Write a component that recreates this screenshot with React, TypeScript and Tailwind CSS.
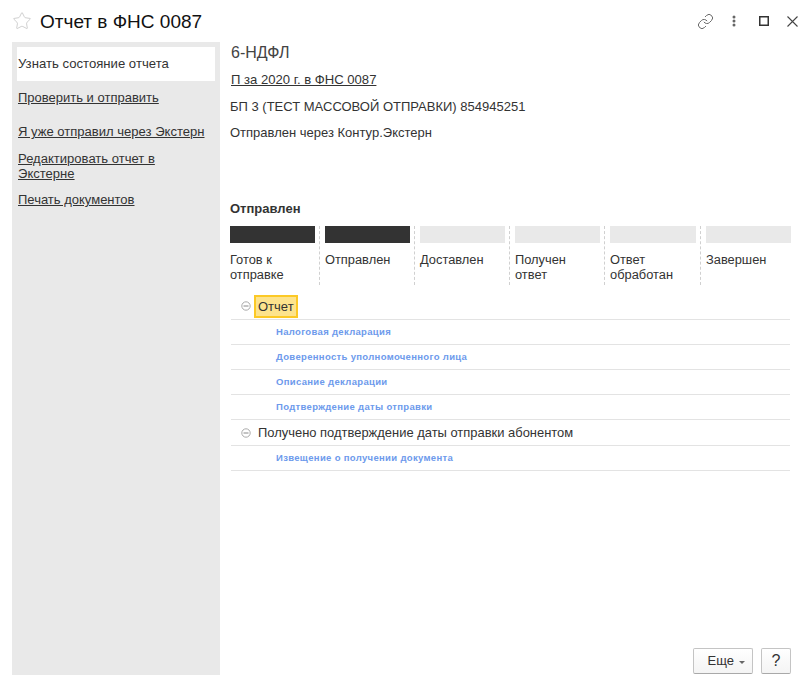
import { Link, Star } from "lucide-react";

const steps = [
  { label: "Готов к отправке", done: true, cell: "w-[90px] pr-[4px] border-r" },
  { label: "Отправлен", done: true, cell: "w-[95px] pl-[5px] pr-[4px] border-r" },
  { label: "Доставлен", done: false, cell: "w-[95px] pl-[5px] pr-[4px] border-r" },
  { label: "Получен ответ", done: false, cell: "w-[95px] pl-[5px] pr-[4px] border-r" },
  { label: "Ответ обработан", done: false, cell: "w-[96px] pl-[5px] pr-[4px] border-r" },
  { label: "Завершен", done: false, cell: "w-[90px] pl-[5px]" },
];

function MinusCircle() {
  return (
    <svg width="10" height="10" viewBox="0 0 10 10" className="shrink-0">
      <circle cx="5" cy="5" r="4.2" fill="none" stroke="#aaa" />
      <path d="M2.5 5h5" stroke="#888" />
    </svg>
  );
}

function DocRow({ text }: { text: string }) {
  return (
    <div className="flex h-[25px] items-center border-b border-[#e3e3e3] pl-[45px] text-[9.5px] font-bold tracking-[0.33px] text-[#6d9aec]">
      {text}
    </div>
  );
}

export default function App() {
  return (
    <div className="flex h-[687px] w-[812px] flex-col bg-white font-['Liberation_Sans',Arial,sans-serif] text-[13px] text-[#333]">
      <header className="flex h-[42px] shrink-0 items-center pl-[12px]">
        <Star size={20} strokeWidth={0.8} className="text-[#b8b8b8]" />
        <h1 className="ml-[8px] text-[19px] leading-none text-[#111]">Отчет в ФНС 0087</h1>
        <div className="ml-auto flex items-center">
          <Link size={17} strokeWidth={1.4} className="mr-[18px] text-[#666]" />
          <svg width="4" height="12" viewBox="0 0 4 12" className="mr-[23px]">
            <circle cx="2" cy="2" r="1.5" fill="#666" />
            <circle cx="2" cy="6" r="1.5" fill="#666" />
            <circle cx="2" cy="10" r="1.5" fill="#666" />
          </svg>
          <svg width="10" height="10" viewBox="0 0 10 10" className="mr-[18px]">
            <rect x="0.75" y="0.75" width="8.5" height="8.5" fill="none" stroke="#333" strokeWidth="1.5" />
          </svg>
          <svg width="11" height="11" viewBox="0 0 11 11" className="mr-[14px]">
            <path d="M0.5 0.5l10 10M10.5 0.5l-10 10" stroke="#444" strokeWidth="1.1" />
          </svg>
        </div>
      </header>

      <div className="flex h-[633px]">
        <aside className="ml-[12px] flex w-[208px] shrink-0 flex-col bg-[#e9e9e9] p-[5px]">
          <div className="flex h-[34px] items-center bg-white pl-[1px] text-[13.15px] text-[#333]">Узнать состояние отчета</div>
          <a className="ml-[1px] mt-[9px] leading-[15px] underline">Проверить и отправить</a>
          <a className="ml-[1px] mt-[19px] text-[13.05px] leading-[15px] underline">Я уже отправил через Экстерн</a>
          <a className="ml-[1px] mt-[12px] text-[13.05px] leading-[15px] underline">
            Редактировать отчет в
            <br />
            Экстерне
          </a>
          <a className="ml-[1px] mt-[11px] leading-[15px] underline">Печать документов</a>
        </aside>

        <main className="flex min-w-0 flex-1 flex-col pl-[10px] pr-[21px]">
          <h2 className="ml-[1px] text-[16px] leading-[21px] text-[#444]">6-НДФЛ</h2>
          <a className="ml-[1px] mt-[9px] text-[13.1px] leading-[15px] underline">П за 2020 г. в ФНС 0087</a>
          <p className="mt-[12px] leading-[15px]">БП 3 (ТЕСТ МАССОВОЙ ОТПРАВКИ) 854945251</p>
          <p className="mt-[11px] leading-[15px]">Отправлен через Контур.Экстерн</p>
          <h3 className="mt-[61px] font-bold leading-[15px]">Отправлен</h3>

          <div className="mt-[10px] flex">
            {steps.map((s) => (
              <div key={s.label} className={`${s.cell} h-[59px] shrink-0 border-dashed border-[#d0d0d0]`}>
                <div className={`h-[17px] ${s.done ? "bg-[#333]" : "bg-[#e9e9e9]"}`} />
                <div className="mt-[9px] text-[12.85px] leading-[15px]">{s.label}</div>
              </div>
            ))}
          </div>

          <div className="ml-[1px] mt-[10px] w-[559px]">
            <div className="flex h-[25px] items-start border-b border-[#e3e3e3] pl-[10px]">
              <span className="mt-[6px] flex">
                <MinusCircle />
              </span>
              <span className="ml-[3px] flex h-[23px] items-center border-2 border-[#fcc926] bg-[#fde38c] px-[2px] text-[#333]">
                Отчет
              </span>
            </div>
            <DocRow text="Налоговая декларация" />
            <DocRow text="Доверенность уполномоченного лица" />
            <DocRow text="Описание декларации" />
            <DocRow text="Подтверждение даты отправки" />
            <div className="flex h-[26px] items-center border-b border-[#e3e3e3] pl-[10px]">
              <MinusCircle />
              <span className="ml-[7px] text-[12.95px]">Получено подтверждение даты отправки абонентом</span>
            </div>
            <DocRow text="Извещение о получении документа" />
          </div>

          <div className="mb-[1px] mt-auto flex justify-end gap-[8px]">
            <button
              type="button"
              className="flex h-[26px] w-[60px] items-center justify-end rounded-[2px] border border-[#c4c4c4] border-b-[#a9a9a9] bg-gradient-to-b from-white to-[#f4f4f4] pr-[7px]"
            >
              Еще
              <span className="ml-[5px] mt-[2px] h-0 w-0 border-x-[3px] border-t-[3px] border-x-transparent border-t-[#666]" />
            </button>
            <button
              type="button"
              className="h-[26px] w-[30px] rounded-[2px] border border-[#c4c4c4] border-b-[#a9a9a9] bg-gradient-to-b from-white to-[#f4f4f4] text-[16px] leading-none"
            >
              ?
            </button>
          </div>
        </main>
      </div>
      <div className="h-[12px] shrink-0" />
    </div>
  );
}
